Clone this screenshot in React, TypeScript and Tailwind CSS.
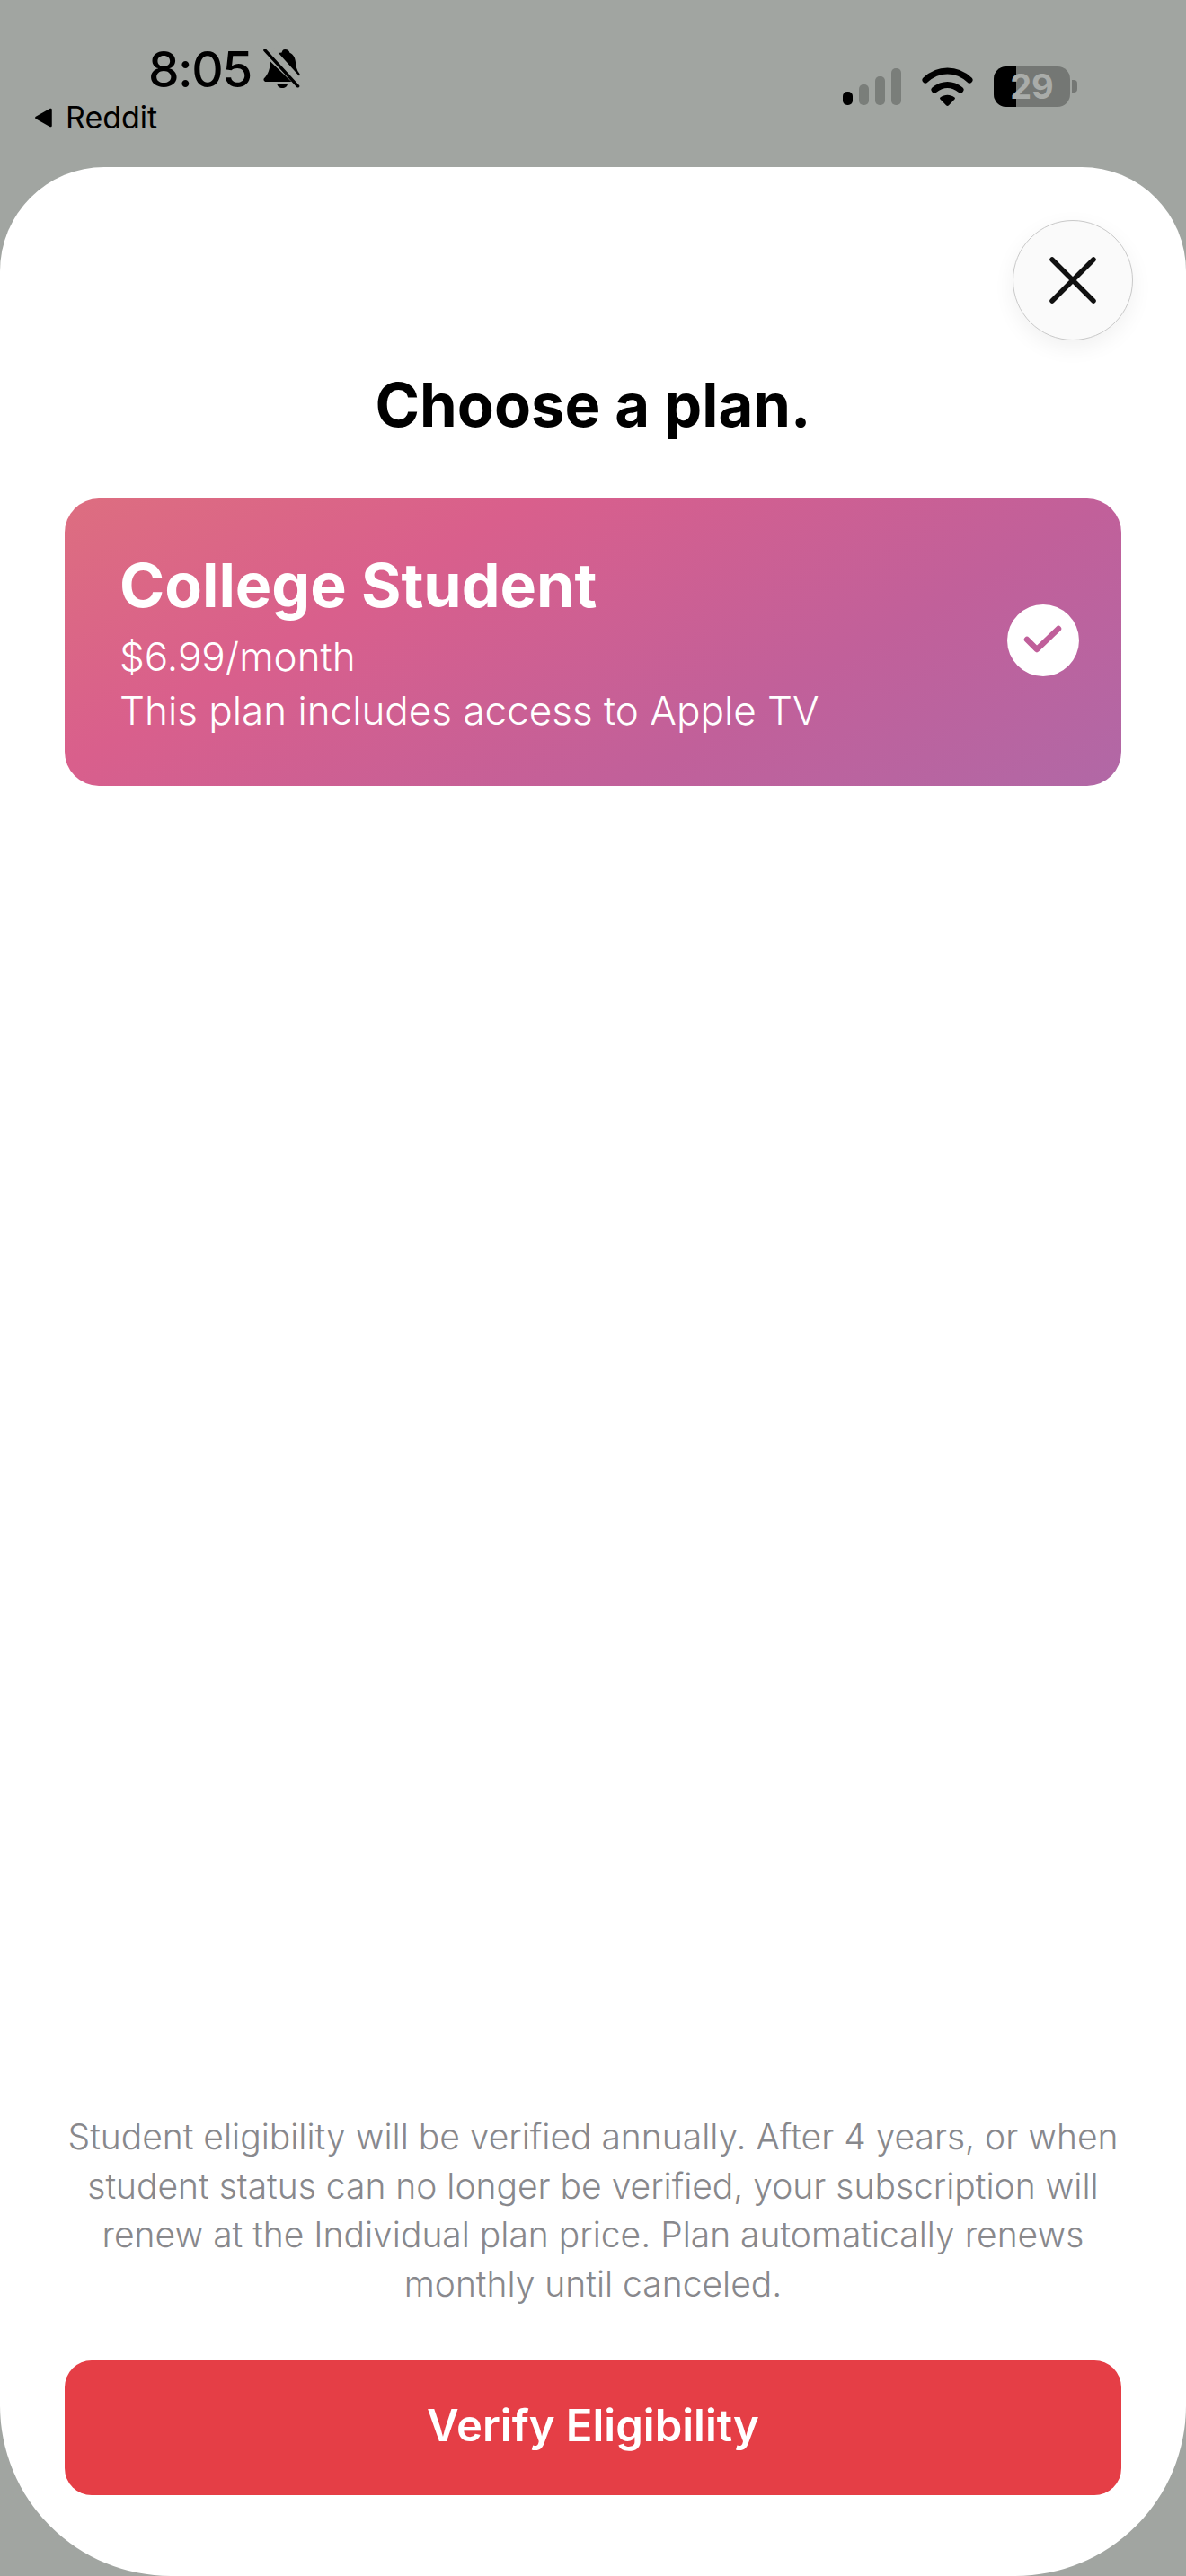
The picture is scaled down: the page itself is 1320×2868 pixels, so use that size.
const FONT = "font-['Inter','Noto_Sans',sans-serif]"

function BellSlash() {
  return (
    <svg width="42" height="46" viewBox="0 0 35 46" preserveAspectRatio="none" className="ml-[12px] mt-[-2px]">
      <path
        d="M21 2c2.400 0 4 1.700 4.400 3.800 3.600 2 5 5.700 5.400 10.200.3 4.600 1.200 9.500 3.700 13 .5 1 0 2.500-1 3L13 7c1.500-1.300 3-1 5-1.400C18.400 3.600 19 2 21 2Z"
        fill="#000"
      />
      <path d="M7.500 15.500 27 38H3.500C1.500 38 .5 35.500 1.800 34c3.700-4.300 5.300-11 5.700-18.500Z" fill="#000" />
      <path d="M13.500 40h10c-.3 3-2.300 5-5 5s-4.700-2-5-5Z" fill="#000" />
      <path d="M6.500 2.500 34 39" stroke="#a1a5a1" strokeWidth="5" strokeLinecap="round" transform="translate(1.500 -1.500)" />
      <path d="M2.500 3 33 43" stroke="#000" strokeWidth="3" strokeLinecap="round" />
    </svg>
  )
}

function SignalBars() {
  return (
    <div className="flex items-end gap-[7px] h-[41px]">
      <div className="w-[11px] h-[15px] rounded-[5px] bg-black" />
      <div className="w-[11px] h-[23px] rounded-[5px] bg-[#7a7e7a]" />
      <div className="w-[11px] h-[32px] rounded-[5px] bg-[#7a7e7a]" />
      <div className="w-[11px] h-[41px] rounded-[5px] bg-[#7a7e7a]" />
    </div>
  )
}

function Wifi() {
  return (
    <svg width="57" height="43" viewBox="0 0 57 43" fill="none">
      <path d="M4 14C18 .5 39 .5 53 14" stroke="#000" strokeWidth="7" strokeLinecap="round" />
      <path d="M14 25c9-7.500 20-7.500 29 0" stroke="#000" strokeWidth="7" strokeLinecap="round" />
      <path d="M20.500 33.500c5-3.800 11-3.800 16 0 .6.500.6 1.300 0 1.900l-6.500 6.800c-.9.900-2.100.9-3 0l-6.500-6.800c-.6-.6-.6-1.400 0-1.900Z" fill="#000" />
    </svg>
  )
}

function Battery() {
  return (
    <div className="flex items-center gap-[2px]">
      <div className="relative w-[85px] h-[45px] rounded-[14px] overflow-hidden bg-[#747774] flex items-center justify-center">
        <div className="absolute left-0 top-0 bottom-0 w-[25px] bg-black" />
        <span className="relative text-[38px] leading-none font-bold text-[#a9aca9]">29</span>
      </div>
      <div className="w-[6px] h-[14px] rounded-r-[4px] bg-[#747774]" />
    </div>
  )
}

function StatusBar() {
  return (
    <div className="h-[186px] shrink-0 flex justify-between">
      <div className="flex flex-col">
        <div className="flex items-center pl-[165px] pt-[46px] h-[108px]">
          <span className="text-[55px] leading-none font-medium tracking-[-1.5px] text-black">8:05</span>
          <BellSlash />
        </div>
        <div className="flex items-center pl-[38px] pt-[3px] gap-[14px]">
          <svg width="21" height="22" viewBox="0 0 17 22" preserveAspectRatio="none">
            <path d="M16 2v18c0 1-1 1.600-2 1L1.500 12.300c-.8-.6-.8-1.900 0-2.500L14 1c1-.6 2-.1 2 1Z" fill="#000" />
          </svg>
          <span className="text-[34px] leading-[40px] font-normal text-black">Reddit</span>
        </div>
      </div>
      <div className="flex items-center gap-[23px] h-[194px] pb-[2px] pr-[121px] self-start">
        <SignalBars />
        <Wifi />
        <Battery />
      </div>
    </div>
  )
}

function PlanCard() {
  return (
    <div className="flex items-center justify-between h-[320px] rounded-[38px] pl-[61px] pr-[47px] pb-[4px] bg-[linear-gradient(150deg,#dd6e80_0%,#d95f8c_30%,#c1609a_68%,#b168a6_100%)]">
      <div className="text-white mt-[5px]">
        <div className="text-[68px] leading-[80px] font-bold">College Student</div>
        <div className="text-[44px] leading-[60px] font-light mt-[10px]">$6.99/month</div>
        <div className="text-[44px] leading-[60px] font-light">This plan includes access to Apple TV</div>
      </div>
      <div className="w-[80px] h-[80px] rounded-full bg-white flex items-center justify-center">
        <svg width="46" height="36" viewBox="0 0 46 36" fill="none">
          <path d="M5 17l11 11L40 5" stroke="#c05f9a" strokeWidth="6.500" strokeLinecap="round" strokeLinejoin="round" />
        </svg>
      </div>
    </div>
  )
}

export default function App() {
  return (
    <div className={`w-[1320px] h-[2868px] flex flex-col bg-[#a1a5a1] overflow-hidden ${FONT}`}>
      <StatusBar />
      <div className="flex-1 flex flex-col bg-white rounded-t-[116px] rounded-b-[190px] px-[72px]">
        <div className="flex justify-end pt-[59px] mr-[-13px]">
          <button className="w-[134px] h-[134px] rounded-full border border-[#c9c9c9] bg-[#fafafa] shadow-[0_8px_24px_rgba(0,0,0,0.06)] flex items-center justify-center">
            <svg width="54" height="54" viewBox="0 0 54 54" fill="none">
              <path d="M4 4l46 46M50 4 4 50" stroke="#111" strokeWidth="5.500" strokeLinecap="round" />
            </svg>
          </button>
        </div>
        <h1 className="text-center text-[67px] leading-[80px] font-bold text-black mt-[32px] mb-[64px]">
          Choose a plan.
        </h1>
        <PlanCard />
        <div className="mt-auto">
          <p className="text-center text-[39px] leading-[54.500px] font-light text-[#88888c]">
            Student eligibility will be verified annually. After 4 years, or when student status can no longer be verified, your subscription will renew at the Individual plan price. Plan automatically renews monthly until canceled.
          </p>
          <button className="w-full h-[150px] pb-[4px] mt-[58px] mb-[90px] rounded-[30px] bg-[#e53e46] text-white text-[49px] font-semibold">
            Verify Eligibility
          </button>
        </div>
      </div>
    </div>
  )
}
